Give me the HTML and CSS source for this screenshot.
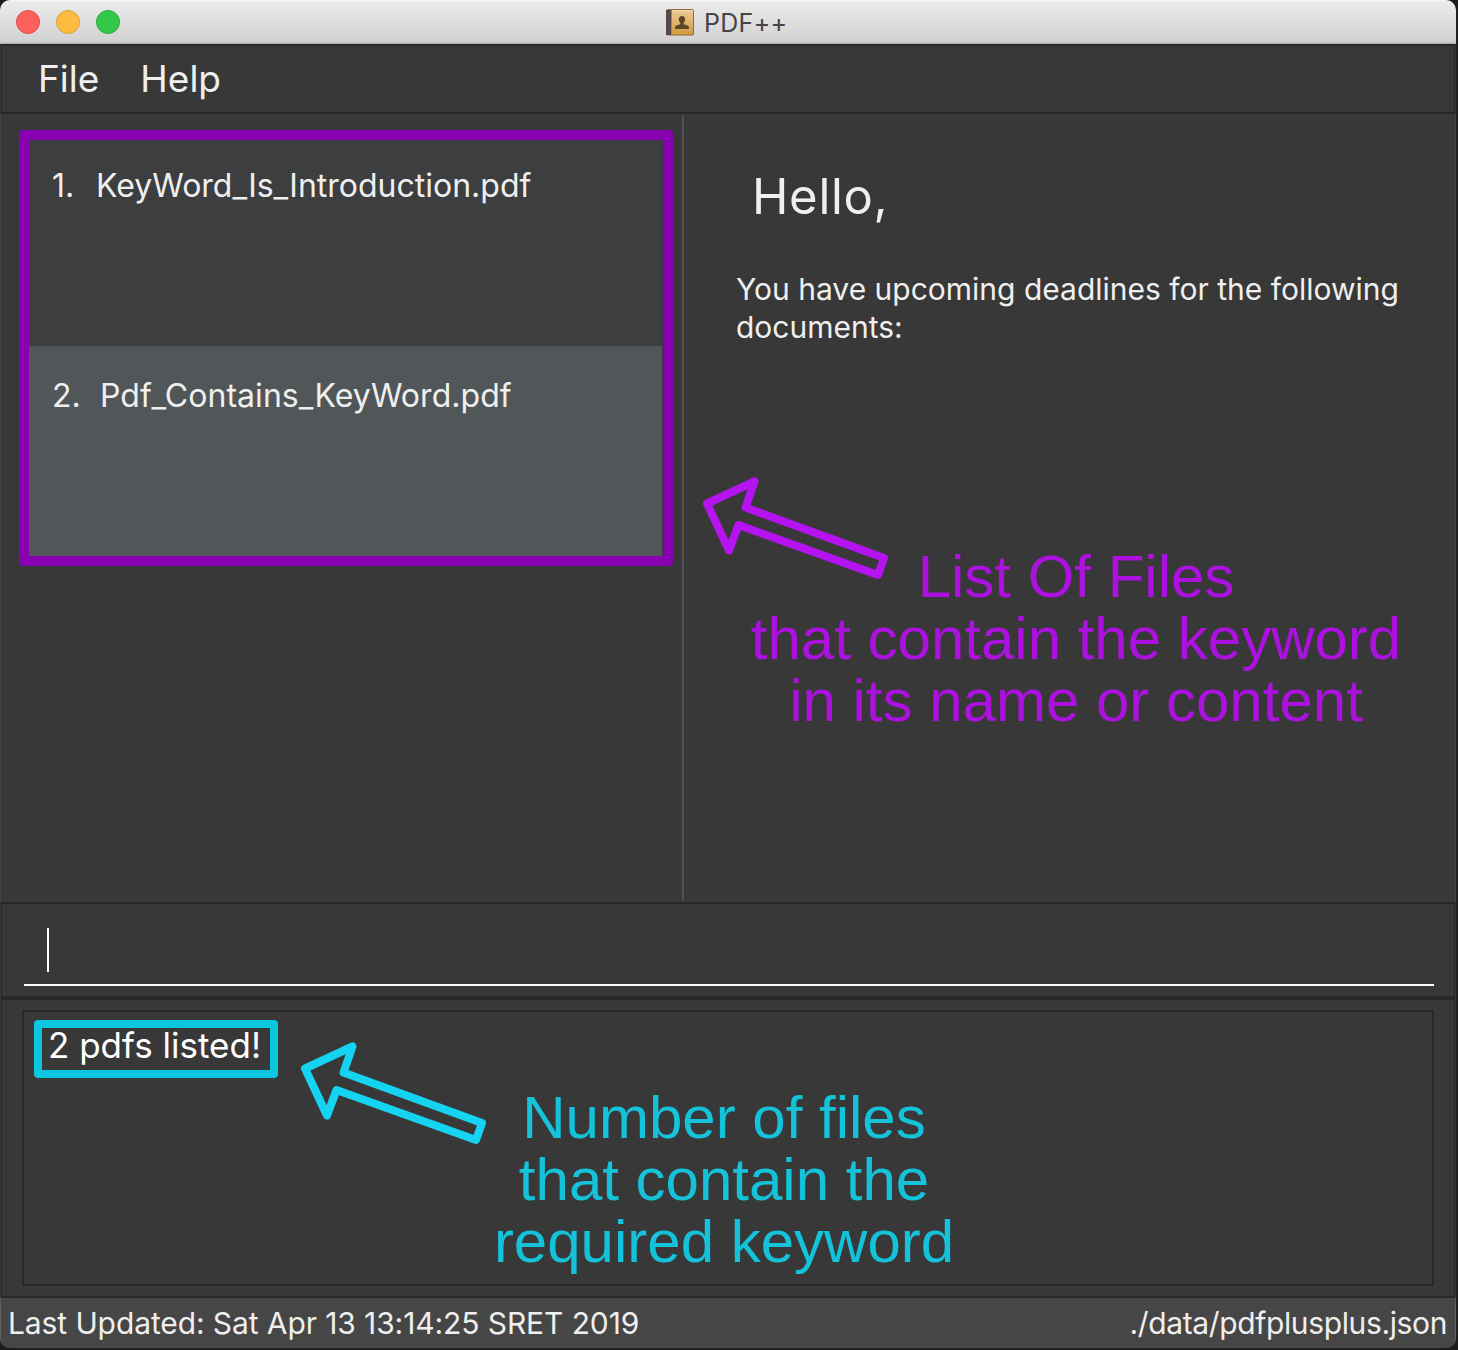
FILE: index.html
```html
<!DOCTYPE html>
<html lang="en">
<head>
<meta charset="utf-8">
<title>PDF++</title>
<link rel="stylesheet" href="styles.css">
</head>
<body>
<div class="window">
  <header class="titlebar">
    <div class="lights"><span class="light close"></span><span class="light minimize"></span><span class="light expand"></span></div>
    <div class="title">
      <svg class="book" width="28" height="27" viewBox="0 0 28 27">
        <defs><linearGradient id="cover" x1="0" y1="0" x2="0" y2="1"><stop offset="0" stop-color="#e9cd97"/><stop offset="1" stop-color="#d39a42"/></linearGradient></defs>
        <rect x="0.5" y="0.5" width="27" height="25.500" rx="1" fill="url(#cover)" stroke="#946b36"/>
        <path d="M0 1H5V26H0Z" fill="#57494a"/>
        <path d="M5.500 1V26" stroke="#a58963"/>
        <path d="M6 1.700H27" stroke="#f7e0b3"/>
        <path d="M16 7c-2 0-3.200 1.300-3.200 3.300 0 1.600.7 2.600 1.500 3.500v1.500c-1.900.8-5 .9-5.300 3V20h14v-1.700c-.3-2.100-3.400-2.200-5.300-3v-1.500c.8-.9 1.500-1.900 1.500-3.500C19.200 8.300 18 7 16 7Z" fill="#5e4523"/>
      </svg>
      <span class="title-text">PDF++</span>
    </div>
  </header>
  <nav class="menu"><span class="menu-file">File</span><span class="menu-help">Help</span></nav>
  <main class="split">
    <section class="list-pane">
      <ol class="files">
        <li class="file"><span class="num">1.</span><span class="name-one">KeyWord_Is_Introduction.pdf</span></li>
        <li class="file even"><span class="num">2.</span><span class="name-two">Pdf_Contains_KeyWord.pdf</span></li>
      </ol>
    </section>
    <section class="detail">
      <h1 class="hello">Hello,</h1>
      <p class="deadlines">You have upcoming deadlines for the following<br>documents:</p>
    </section>
  </main>
  <section class="command"><div class="field"><span class="caret"></span></div></section>
  <section class="result"><div class="result-box"><div class="message">2 pdfs listed!</div></div></section>
  <footer class="status"><span class="updated">Last Updated: Sat Apr 13 13:14:25 SRET 2019</span><span class="path">./data/pdfplusplus.json</span></footer>
</div>
<svg class="arrow arrow-files" width="190" height="110" viewBox="0 0 190 110"><path d="M7 27.500 54.500 5.500 45.500 31.500 184 82 178 99 38.500 49 29 74.500Z"/></svg>
<p class="note note-files">List Of Files<br>that contain the keyword<br>in its name or content</p>
<svg class="arrow arrow-count" width="190" height="110" viewBox="0 0 190 110"><path d="M7 27.500 54.500 5.500 45.500 31.500 184 82 178 99 38.500 49 29 74.500Z"/></svg>
<p class="note note-count">Number of files<br>that contain the<br>required keyword</p>
</body>
</html>
```
FILE: styles.css
```css
* { box-sizing: border-box; }
body { margin: 0; width: 1458px; height: 1350px; position: relative; overflow: hidden; background: #1c1a1c; font-family: Inter, "Liberation Sans", sans-serif; color: #efefef; }
h1, p, ol { margin: 0; padding: 0; font-weight: inherit; }
span { white-space: nowrap; }
.window { width: 1456px; height: 1348px; border-radius: 10px; overflow: hidden; background: #383838; display: flex; flex-direction: column; box-shadow: 0 0 0 1px #242224; }
.titlebar { height: 44px; flex: none; display: grid; grid-template-columns: 650px auto 1fr; align-items: center; background: linear-gradient(#f7f7f7 0, #ebebeb 2px, #d2d2d2 42px, #b6b6b6 43px); }
.lights { display: flex; gap: 16px; padding-left: 16px; }
.light { width: 24px; height: 24px; border-radius: 50%; border: 1px solid; }
.close { background: #fc605b; border-color: #e04843; }
.minimize { background: #fdbc40; border-color: #dea034; }
.expand { background: #34c84a; border-color: #27aa35; }
.title { display: flex; align-items: center; gap: 10px; padding-left: 16px; }
.title-text { font-size: 25px; line-height: 42px; color: #454545; letter-spacing: .3px; padding-top: 2px; }
.menu { height: 70px; flex: none; border: 2px solid #292929; border-width: 2px 1px; margin: 0 1px; padding-left: 36px; display: flex; gap: 41px; font-size: 37px; line-height: 65px; }
.split { height: 788px; flex: none; display: flex; border: 1px solid #454545; border-width: 0 1px; }
.list-pane { width: 683px; padding: 16px 0 0 18px; border-right: 2px solid #505050; border-image: linear-gradient(transparent 2px, #505050 2px, #505050 786px, transparent 786px) 1; border-width: 0 2px 0 0; }
.files { width: 654px; height: 436px; border: 10px solid #8900b1; border-radius: 4px; list-style: none; padding-right: 1px; display: grid; grid-template-rows: 206px 210px; }
.file { background: #3c3e3f; padding: 25px 0 0 23px; display: flex; align-items: flex-start; font-size: 32px; line-height: 41px; }
.even { background: #515658; padding-top: 29px; }
.num { width: 44px; flex: none; }
.even .num { width: 48px; }
.name-two { letter-spacing: .05px; }
.detail { padding: 50px 0 0 52px; }
.hello { font-size: 49px; line-height: 66px; padding-left: 16px; letter-spacing: .7px; }
.deadlines { font-size: 30px; line-height: 38px; padding-top: 40px; white-space: nowrap; }
.command { height: 95px; flex: none; border: 2px solid #292929; border-width: 2px 1px 1px; margin: 0 1px; padding: 0 20px 0 22px; }
.field { height: 82px; border-bottom: 2px solid #fff; padding: 24px 0 0 23px; }
.caret { display: block; width: 2px; height: 44px; background: #fff; }
.result { height: 301px; flex: none; border: 2px solid #292929; border-width: 3px 1px 2px; margin: 0 1px; padding: 10px 20px 11px; }
.result-box { height: 276px; border: 2px solid #292929; padding: 8px 10px; }
.message { width: 244px; height: 58px; border: 8px solid #08c7de; border-radius: 4px; color: #fff; font-size: 35px; line-height: 34px; padding-left: 6px; white-space: nowrap; }
.status { flex: 1; background: #464646; border: 1px solid #606060; border-top: 0; border-radius: 0 0 10px 10px; padding: 0 8px 0 7px; display: flex; justify-content: space-between; font-size: 30px; line-height: 51px; }
.updated { letter-spacing: -.1px; }
.path { letter-spacing: -.37px; }
.arrow { position: absolute; fill: none; stroke-width: 8px; stroke-linejoin: round; }
.arrow-files { left: 700px; top: 476px; stroke: #b513f0; }
.arrow-count { left: 298px; top: 1041px; stroke: #15d4f2; }
.note { position: absolute; font: 60px/62px "Liberation Sans", Arial, sans-serif; text-align: center; white-space: nowrap; }
.note-files { left: 746px; top: 546px; width: 660px; color: #ac11df; }
.note-count { left: 484px; top: 1087px; width: 480px; color: #14c3da; }
```
